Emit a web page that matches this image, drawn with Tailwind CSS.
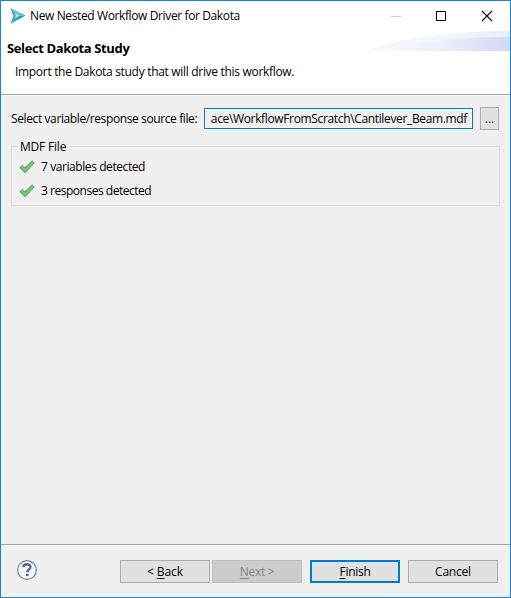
<!DOCTYPE html>
<html lang="en">
<head>
<meta charset="utf-8">
<title>New Nested Workflow Driver for Dakota</title>
<script src="https://cdn.jsdelivr.net/npm/@tailwindcss/browser@4"></script>
</head>
<body class="w-[511px] h-[598px] overflow-hidden">
<div class="w-[511px] h-[598px] flex flex-col border border-[#1883d7] bg-[#f0f0f0] text-black text-[12px] leading-4 font-['Open_Sans','Noto_Sans',sans-serif] whitespace-nowrap">
  <header class="relative h-[93px] shrink-0 bg-white">
    <svg class="absolute right-0 top-[30px]" width="141" height="20" viewBox="0 0 141 20">
      <defs>
        <linearGradient id="a"><stop offset="0" stop-color="#f3f6fd"/><stop offset=".5" stop-color="#f3f6fd"/><stop offset="1" stop-color="#e8eefa"/></linearGradient>
        <linearGradient id="b"><stop offset="0" stop-color="#f9fbfe"/><stop offset=".5" stop-color="#ebf0fa"/><stop offset="1" stop-color="#d2daf4"/></linearGradient>
      </defs>
      <path d="M0 20C22 8 85 0 141 0V20Z" fill="url(#a)"/>
      <path d="M3 20C38 12 88 6 141 6V20Z" fill="url(#b)"/>
    </svg>
    <div class="relative flex h-[29px] items-center">
      <svg class="ml-[9px]" width="16" height="16" viewBox="0 0 16 16">
        <path d="M1 .5 15.5 7.5 1 15.5 4 8Z" fill="#43b3c7"/>
        <path d="M1 .5 15.5 7.5 8 8 3 3Z" fill="#70c8d6"/>
        <path d="M4.5 5.5 9 7.7 5 10.3 6 8Z" fill="#e5f8fb"/>
        <path d="M1 .5 4 8 1 15.5M2.5 4.5 4.5 8 2.8 12" fill="none" stroke="#3293a8" stroke-width=".8"/>
        <path d="M2 14.5 15 7.8 9 8.5Z" fill="#2a98ae"/>
      </svg>
      <span class="ml-1 w-[240px] tracking-[-0.38px]">New Nested Workflow Driver for Dakota</span>
      <svg class="ml-auto mr-[16px]" width="104" height="12" viewBox="0 0 104 12" fill="none">
        <path d="M1 6.5h10" stroke="#ccc"/>
        <path d="M46.5 1.5h9v9h-9z" stroke="#000"/>
        <path d="M92 1l10 10M102 1 92 11" stroke="#000" stroke-width="1.1"/>
      </svg>
    </div>
    <h1 class="relative ml-[6px] mt-[10px] font-bold text-[13px] tracking-[-0.38px]"><span>Select Dakota Study</span></h1>
    <p class="relative ml-[14px] mt-2 tracking-[-0.31px]"><span>Import the Dakota study that will drive this workflow.</span></p>
  </header>
  <main class="border-t border-[#a0a0a0] grow flex flex-col">
    <div class="h-px bg-white"></div>
    <div class="flex mt-[11px] ml-[10px] mr-[11px] h-[23px] items-center">
      <label for="src" class="w-[193px] tracking-[-0.39px]"><span>Select variable/response source file:</span></label>
      <div class="w-[269px] h-[21px] border border-[#0078d7] p-px">
        <div id="src" class="h-full bg-[#f0f0f0] outline outline-white flex justify-end items-center pr-[4px] tracking-[-0.35px]"><span>ace\WorkflowFromScratch\Cantilever_Beam.mdf</span></div>
      </div>
      <button class="ml-auto w-[19px] h-[23px] bg-[#e1e1e1] border border-[#adadad]">...</button>
    </div>
    <fieldset class="ml-[10px] mt-[8px] w-[489px] h-[68px] border border-[#dcdcdc] pl-[7px]">
      <legend class="px-[2px] -ml-px h-4 tracking-[-0.2px]"><span class="relative top-px">MDF File</span></legend>
      <div class="flex items-center h-6 mt-px"><svg class="mr-[6px]" width="16" height="16" viewBox="0 0 16 16"><path id="c" d="M.8 8.7 3.2 6.5 6 9 13 1.8 15.2 3.8 6.2 13.8Z" fill="#7bc779" stroke="#4a9d4c" stroke-width=".9"/></svg><span class="tracking-[-0.42px]">7 variables detected</span></div>
      <div class="flex items-center h-6"><svg class="mr-[6px]" width="16" height="16" viewBox="0 0 16 16"><use href="#c"/></svg><span class="tracking-[-0.48px]">3 responses detected</span></div>
    </fieldset>
  </main>
  <footer class="h-[53px] shrink-0 border-t border-[#a0a0a0]">
    <div class="h-px bg-white"></div>
    <div class="flex pt-[14px] pl-[15px] pr-3">
      <svg class="-mt-px" width="21" height="21" viewBox="0 0 21 21"><circle cx="11" cy="11" r="9.4" fill="#f7f8fa" stroke="#70809f" stroke-width="1.2"/><path d="M7.5 8.3C7.5 4.2 14.5 4.3 14.5 8.1 14.5 10.5 11.3 10.5 11.3 13.2" fill="none" stroke="#536791" stroke-width="2.3"/><path d="M10 14.8h2.6v2.3H10z" fill="#536791"/></svg>
      <button class="ml-[83px] w-[90px] h-[23px] bg-[#e1e1e1] border border-[#adadad] tracking-[-0.1px]"><span>&lt; <u class="underline-offset-2">B</u>ack</span></button>
      <button class="ml-[2px] w-[90px] h-[23px] bg-[#ccc] border border-[#bfbfbf] text-[#838383] tracking-[-0.3px]"><span><u class="underline-offset-2">N</u>ext &gt;</span></button>
      <button class="ml-2 w-[90px] h-[23px] bg-[#e1e1e1] border-2 border-[#0078d7] leading-[14px] tracking-[-0.3px]"><span><u class="underline-offset-2">F</u>inish</span></button>
      <button class="ml-2 w-[90px] h-[23px] bg-[#e1e1e1] border border-[#adadad] tracking-[-0.2px]"><span>Cancel</span></button>
    </div>
  </footer>
</div>
</body>
</html>
